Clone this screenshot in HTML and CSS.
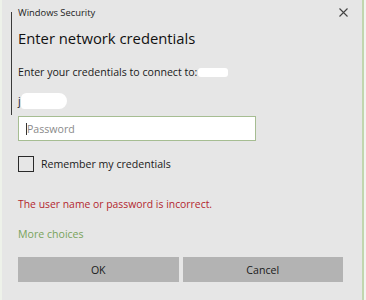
FILE: index.html
```html
<!DOCTYPE html>
<html>
<head>
<meta charset="utf-8">
<link rel="stylesheet" href="styles.css">
</head>
<body>
<div class="dialog">
  <div class="titlebar">
    <span class="app">Windows Security</span>
    <span class="close" aria-label="Close">
      <svg width="9" height="9" viewBox="0 0 9 9"><path d="M0.5 0.5 L8.5 8.5 M8.5 0.5 L0.5 8.5" stroke="#444" stroke-width="1.1" fill="none"/></svg>
    </span>
  </div>
  <h1 class="heading">Enter network credentials</h1>
  <p class="prompt">Enter your credentials to connect to:<span class="redact redact-host"></span></p>
  <p class="user">j<span class="dots">--</span><span class="redact redact-user"></span></p>
  <div class="field"><span class="caret"></span><span class="placeholder">Password</span></div>
  <label class="remember"><span class="box"></span><span>Remember my credentials</span></label>
  <p class="error">The user name or password is incorrect.</p>
  <p class="more">More choices</p>
  <div class="buttons">
    <button class="btn">OK</button>
    <button class="btn">Cancel</button>
  </div>
</div>
</body>
</html>
```
FILE: styles.css
```css
html, body {
  margin: 0;
  padding: 0;
  background: #f2f4f0;
}
body {
  width: 366px;
  height: 300px;
  overflow: hidden;
  font-family: "Open Sans", "Noto Sans", sans-serif;
  color: #1a1a1a;
}
.dialog {
  position: relative;
  box-sizing: border-box;
  width: 364px;
  height: 300px;
  background: #e6e6e6;
  border-left: 2px solid #eef2ea;
  border-right: 2px solid #c2d6ae;
  padding: 0 0 0 16px;
  display: flex;
  flex-direction: column;
}
.dialog::before {
  content: "";
  position: absolute;
  left: 9px;
  top: 12px;
  width: 1px;
  height: 103px;
  background: #3a3a3a;
}
.titlebar {
  display: flex;
  align-items: center;
  justify-content: space-between;
  height: 24px;
  padding-right: 14px;
}
.app {
  font-size: 9.4px;
  color: #222;
}
.close {
  display: flex;
}
.heading {
  margin: 3px 0 0;
  font-size: 14.8px;
  font-weight: 400;
  line-height: 22px;
  color: #111;
}
.prompt {
  margin: 16px 0 0;
  font-size: 10.6px;
  line-height: 15px;
  display: flex;
  align-items: center;
}
.redact {
  display: inline-block;
  background: #fff;
  border-radius: 3px;
}
.redact-host {
  width: 30px;
  height: 9px;
  margin-left: 1px;
}
.user {
  margin: 13px 0 0;
  font-size: 10.6px;
  line-height: 15px;
  display: flex;
  align-items: center;
}
.dots {
  color: #888;
  font-size: 8px;
  margin-left: 1px;
}
.redact-user {
  width: 46px;
  height: 16px;
  margin-left: -6px;
  border-radius: 6px 9px 9px 4px;
}
.field {
  box-sizing: border-box;
  margin-top: 7px;
  width: 238px;
  height: 25px;
  background: #fff;
  border: 1px solid #a6bd92;
  display: flex;
  align-items: center;
  padding-left: 7px;
}
.caret {
  width: 1px;
  height: 12px;
  background: #333;
}
.placeholder {
  font-size: 10.6px;
  color: #8a8a8a;
}
.remember {
  margin-top: 15px;
  display: flex;
  align-items: center;
  gap: 7px;
  font-size: 10.6px;
}
.box {
  box-sizing: border-box;
  width: 16px;
  height: 16px;
  border: 1px solid #2a2a2a;
}
.error {
  margin: 25px 0 0;
  font-size: 10.4px;
  line-height: 15px;
  color: #b3262f;
}
.more {
  margin: 15px 0 0;
  font-size: 10.6px;
  line-height: 15px;
  color: #79a35b;
}
.buttons {
  margin-top: 15px;
  display: flex;
  gap: 4px;
  width: 325px;
}
.btn {
  flex: 1;
  height: 25px;
  border: none;
  background: #b3b3b3;
  font-family: "Open Sans", "Noto Sans", sans-serif;
  font-size: 10.6px;
  color: #1a1a1a;
  padding: 0;
}
```
